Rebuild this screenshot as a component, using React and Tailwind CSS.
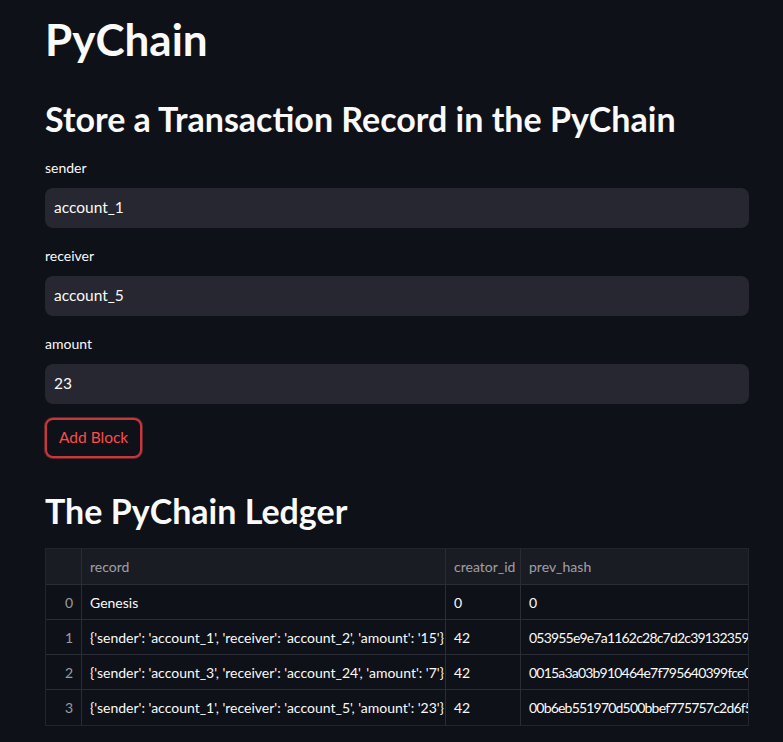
import React from 'react';

const rows = [
  { idx: 0, record: 'Genesis', creator: '0', prev: '0' },
  {
    idx: 1,
    record: "{'sender': 'account_1', 'receiver': 'account_2', 'amount': '15'}",
    creator: '42',
    prev: '053955e9e7a1162c28c7d2c39132359c2a1f0e',
  },
  {
    idx: 2,
    record: "{'sender': 'account_3', 'receiver': 'account_24', 'amount': '7'}",
    creator: '42',
    prev: '0015a3a03b910464e7f795640399fce0e8b21a',
  },
  {
    idx: 3,
    record: "{'sender': 'account_1', 'receiver': 'account_5', 'amount': '23'}",
    creator: '42',
    prev: '00b6eb551970d500bbef775757c2d6f5a0c3e1',
  },
];

function Field({ label, value }) {
  return (
    <div className="flex flex-col">
      <label className="text-[14px] leading-[20px] text-[#fafafa] mb-[10px]">{label}</label>
      <div className="h-[40px] rounded-[8px] bg-[#262730] flex items-center px-[9px] text-[15.5px] text-[#fafafa]">
        {value}
      </div>
    </div>
  );
}

export default function App() {
  return (
    <div
      className="min-h-[742px] bg-[#0e1117] text-[#fafafa] overflow-hidden"
      style={{ fontFamily: 'Lato, "Liberation Sans", sans-serif' }}
    >
      <div className="w-[704px] ml-[45px] pt-[12px]">
        <h1 className="text-[44px] leading-[54px] font-bold">PyChain</h1>
        <h2 className="text-[34px] leading-[44px] font-bold mt-[31px]">
          Store a Transaction Record in the PyChain
        </h2>
        <div className="mt-[17px] flex flex-col gap-[18px]">
          <Field label="sender" value="account_1" />
          <Field label="receiver" value="account_5" />
          <Field label="amount" value="23" />
        </div>
        <button className="mt-[14px] h-[40px] px-[12px] rounded-[8px] border-2 border-[#c8373d] bg-[#0e1117] text-[#ff4b4b] text-[15.5px] shadow-[0_0_0_1px_rgba(255,75,75,0.35)]">
          Add Block
        </button>
        <h3 className="text-[34px] leading-[44px] font-bold mt-[31px]">The PyChain Ledger</h3>
        <div className="mt-[15px] border border-[#23252d] overflow-hidden text-[14px]">
          <div className="flex h-[36px] bg-[#1a1c24] text-[#fafafa99] border-b border-[#2b2d36]">
            <div className="w-[36px] shrink-0 border-r border-[#2b2d36]"></div>
            <div className="w-[364px] shrink-0 border-r border-[#2b2d36] flex items-center px-[8px]">record</div>
            <div className="w-[75px] shrink-0 border-r border-[#2b2d36] flex items-center px-[8px]">creator_id</div>
            <div className="flex-1 flex items-center px-[8px] whitespace-nowrap overflow-hidden">prev_hash</div>
          </div>
          {rows.map((r) => (
            <div key={r.idx} className="flex h-[35px] border-b border-[#2b2d36] last:border-b-0">
              <div className="w-[36px] shrink-0 border-r border-[#2b2d36] flex items-center justify-end pr-[8px] text-[#fafafa99]">
                {r.idx}
              </div>
              <div className="w-[364px] shrink-0 border-r border-[#2b2d36] flex items-center px-[8px] whitespace-nowrap overflow-hidden">
                {r.record}
              </div>
              <div className="w-[75px] shrink-0 border-r border-[#2b2d36] flex items-center px-[8px]">{r.creator}</div>
              <div className="flex-1 flex items-center px-[8px] whitespace-nowrap overflow-hidden tracking-[-0.8px]">
                {r.prev}
              </div>
            </div>
          ))}
        </div>
      </div>
    </div>
  );
}
